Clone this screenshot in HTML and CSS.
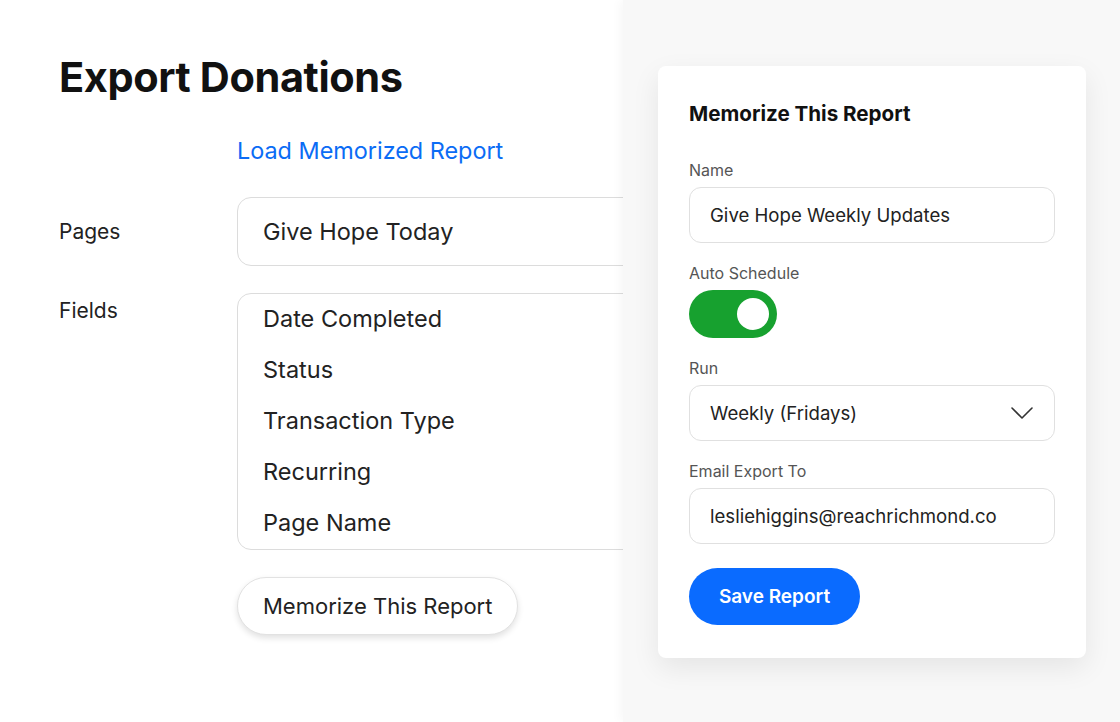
FILE: index.html
```html
<!DOCTYPE html>
<html lang="en">
<head>
  <meta charset="UTF-8">
  <title>Export Donations</title>
  <link rel="stylesheet" href="styles.css">
</head>
<body>

  <!-- export form -->
  <div class="main">
    <h1>Export Donations</h1>
    <div class="row link-row">
      <div class="label"></div>
      <a class="load-link" href="#">Load Memorized Report</a>
    </div>
    <div class="row pages-row">
      <div class="label">Pages</div>
      <div class="box pages-box">Give Hope Today</div>
    </div>
    <div class="row">
      <div class="label fields-label">Fields</div>
      <ul class="box fields-box">
        <li>Date Completed</li>
        <li>Status</li>
        <li>Transaction Type</li>
        <li>Recurring</li>
        <li>Page Name</li>
      </ul>
    </div>
    <div class="row">
      <div class="label"></div>
      <button class="memorize-btn">Memorize This Report</button>
    </div>
  </div>

  <!-- side panel -->
  <div class="side">
    <div class="card">
      <h2>Memorize This Report</h2>

      <label class="field-label">Name</label>
      <div class="input">Give Hope Weekly Updates</div>

      <label class="field-label">Auto Schedule</label>
      <div class="toggle"><span class="knob"></span></div>

      <label class="field-label">Run</label>
      <div class="input select">
        <span>Weekly (Fridays)</span>
        <svg width="24" height="14" viewBox="0 0 24 14" fill="none" stroke="#333" stroke-width="1.6" stroke-linecap="round" stroke-linejoin="round">
          <path d="M2 2 L12 12 L22 2"/>
        </svg>
      </div>

      <label class="field-label">Email Export To</label>
      <div class="input">lesliehiggins@reachrichmond.co</div>

      <button class="save-btn">Save Report</button>
    </div>
  </div>

</body>
</html>
```

FILE: styles.css
```css
body {
  font-family: 'Inter', 'Noto Sans', sans-serif;
  margin: 0;
  padding: 0;
  background: #fff;
  color: #1c1c1c;
  display: flex;
  height: 722px;
  overflow: hidden;
}
.main {
  width: 623px;
  flex-shrink: 0;
  overflow: hidden;
  padding: 52px 0 0 59px;
  box-sizing: border-box;
}
h1 {
  font-size: 41.5px;
  font-weight: 700;
  margin: 0 0 34px;
  letter-spacing: -0.4px;
  color: #111;
}
.row {
  display: flex;
  margin-bottom: 27px;
}
.link-row {
  margin-bottom: 36px;
}
.label {
  width: 178px;
  flex-shrink: 0;
  font-size: 21px;
  color: #222;
}
.pages-row .label {
  align-self: center;
}
.fields-label {
  padding-top: 5px;
}
.load-link {
  color: #0b6cf5;
  font-size: 23.4px;
  text-decoration: none;
  margin-bottom: -4px;
}
.box {
  border: 1.5px solid #dcdcdc;
  border-radius: 14px;
  width: 520px;
  flex-shrink: 0;
  box-sizing: border-box;
  font-size: 23.5px;
  color: #222;
  background: #fff;
}
.pages-box {
  height: 69px;
  display: flex;
  align-items: center;
  padding-left: 25px;
}
.fields-box {
  list-style: none;
  margin: 0;
  padding: 9px 0 10px 25px;
  height: 257px;
}
.fields-box li {
  height: 51px;
  line-height: 32px;
}
.memorize-btn {
  font-family: inherit;
  font-size: 22px;
  color: #222;
  background: #fff;
  border: 1.5px solid #e2e2e2;
  border-radius: 30px;
  height: 58px;
  padding: 0 25px;
  box-shadow: 0 3px 6px rgba(0,0,0,0.12);
}
.side {
  flex: 1;
  background: #f8f8f8;
  box-shadow: -3px 0 10px rgba(0,0,0,0.035);
  position: relative;
  z-index: 1;
  padding: 66px 0 0 35px;
}
.card {
  width: 428px;
  height: 592px;
  box-sizing: border-box;
  background: #fff;
  border-radius: 8px;
  padding: 30px 31px;
  box-shadow: 0 10px 28px rgba(0,0,0,0.08);
}
h2 {
  font-size: 20.6px;
  font-weight: 700;
  margin: 5px 0 34px;
  color: #111;
}
.field-label {
  display: block;
  font-size: 16px;
  color: #555;
  margin-bottom: 7px;
}
.input {
  height: 56px;
  border: 1.5px solid #e0e0e0;
  border-radius: 12px;
  box-sizing: border-box;
  display: flex;
  align-items: center;
  padding: 0 20px;
  font-size: 18.6px;
  color: #222;
  margin-bottom: 20px;
}
.select {
  justify-content: space-between;
  padding-right: 20px;
}
.toggle {
  width: 88px;
  height: 48px;
  border-radius: 24px;
  background: #17a12f;
  display: flex;
  align-items: center;
  justify-content: flex-end;
  padding: 0 8px;
  box-sizing: border-box;
  margin-bottom: 20px;
}
.knob {
  width: 32px;
  height: 32px;
  border-radius: 50%;
  background: #fff;
}
.save-btn {
  margin-top: 4px;
  font-family: inherit;
  font-size: 19px;
  font-weight: 600;
  color: #fff;
  background: #0a6bff;
  border: none;
  border-radius: 30px;
  width: 171px;
  height: 57px;
}
```
